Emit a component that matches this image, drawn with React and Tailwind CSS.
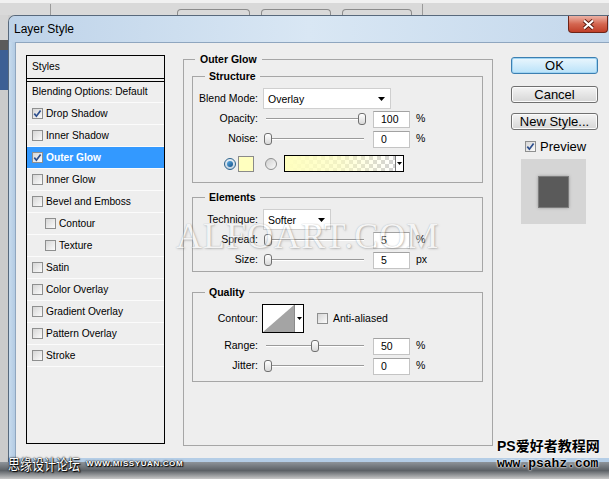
import React from "react"

const Arrow = () => (
  <svg width="7" height="4" viewBox="0 0 7 4">
    <path d="M0 0h7L3.5 4z" fill="#000" />
  </svg>
)

const Check = ({ checked, className = "" }) => (
  <span className={`flex items-center justify-center w-[11px] h-[11px] shrink-0 border border-[#8e8f8f] bg-linear-to-br from-[#d6d6d6] to-[#fbfbfb] ${className}`}>
    {checked && (
      <svg width="9" height="9" viewBox="0 0 9 9">
        <path d="M1.3 4.6l2.1 2.6 4.2-5.8" fill="none" stroke="#2d4f8e" strokeWidth="1.7" />
      </svg>
    )}
  </span>
)

const Slider = ({ thumb }) => (
  <div className="relative w-[102px] h-[14px] flex items-center">
    <div className="mx-[2px] flex-1 h-[2px] border-t border-[#9a9a9a] border-b border-b-white" />
    <span className={`absolute top-[1px] w-[8px] h-[12px] rounded-[3px] border border-[#707070] bg-linear-to-b from-white to-[#d8d8d8] ${thumb}`} />
  </div>
)

const NumBox = ({ v }) => (
  <div className="w-[37px] h-[17px] bg-white border border-[#c4c4c4] border-t-[#a2a2a2] pl-[7px] leading-[15px]">{v}</div>
)

const SliderRow = ({ label, thumb, value, unit = "%" }) => (
  <div className="flex items-center h-[20px]">
    <span className="w-[65px] text-right">{label}</span>
    <div className="ml-[6px]"><Slider thumb={thumb} /></div>
    <div className="ml-[7px]"><NumBox v={value} /></div>
    <span className="ml-[6px]">{unit}</span>
  </div>
)

const Select = ({ value, w }) => (
  <div className={`flex items-center justify-between h-[21px] ml-[5px] bg-white border border-[#cfcfcf] pl-[4px] pr-[5px] ${w}`}>
    <span className="pt-[2px]">{value}</span>
    <Arrow />
  </div>
)

const rows = [
  { name: "Drop Shadow", checked: true },
  { name: "Inner Shadow" },
  { name: "Outer Glow", checked: true, active: true },
  { name: "Inner Glow" },
  { name: "Bevel and Emboss" },
  { name: "Contour", indent: true },
  { name: "Texture", indent: true },
  { name: "Satin" },
  { name: "Color Overlay" },
  { name: "Gradient Overlay" },
  { name: "Pattern Overlay" },
  { name: "Stroke" },
]

const Button = ({ children, primary, className = "" }) => (
  <div
    className={`h-[17px] w-[87px] rounded-[3px] border text-center text-[13px] leading-[15px] ${
      primary
        ? "border-[#3c7fb1] bg-linear-to-b from-[#eaf6fd] to-[#b9e2f9] shadow-[inset_0_0_0_1px_#9fd4f3]"
        : "border-[#707070] bg-linear-to-b from-[#f4f4f4] to-[#d6d6d6] shadow-[inset_0_0_0_1px_#fbfbfb]"
    } ${className}`}
  >
    {children}
  </div>
)

export default function App() {
  return (
    <div className="relative w-[609px] h-[479px] overflow-hidden bg-[#cdcdcd] font-['Liberation_Sans',Arial,sans-serif] text-black">
      {/* photoshop toolbar behind the dialog */}
      <div className="h-[15px] bg-[#d9d9d9] border-t-[3px] border-[#f1f1f1] flex items-end">
        <div className="ml-[50px] w-px h-[11px] bg-[#9a9a9a]" />
        <div className="ml-[126px] w-[73px] h-[6px] border border-b-0 border-[#8c8c8c] rounded-t-[4px]" />
        <div className="ml-[11px] w-[70px] h-[6px] border border-b-0 border-[#8c8c8c] rounded-t-[4px]" />
        <div className="ml-[11px] w-[70px] h-[6px] border border-b-0 border-[#8c8c8c] rounded-t-[4px]" />
        <div className="ml-[10px] w-px h-[11px] bg-[#9a9a9a]" />
      </div>

      <div className="flex">
        <div className="w-[8px] flex flex-col">
          <div className="h-[25px] bg-[#d4d4d4]" />
          <div className="h-[10px] bg-[#5b5b5b]" />
          <div className="h-[40px] bg-[#3c5f94]" />
          <div className="flex-1 bg-[#cbcbcb]" />
        </div>

        {/* dialog window */}
        <div className="flex-1 flex flex-col rounded-tl-[7px] overflow-hidden border-l border-t border-[#58697c]">
          <div className="h-[26px] flex items-start justify-between bg-linear-to-r from-[#bed3e9] via-[#d9e7f4] to-[#c4d8ec]">
            <span className="ml-[5px] mt-[6px] text-[12px] leading-[14px]">Layer Style</span>
            <div className="w-[40px] h-[17px] mr-[1px] rounded-b-[4px] border border-t-0 border-[#6d2418] bg-linear-to-b from-[#ebb2a6] via-[#d46650] to-[#c03e28] flex items-center justify-center">
              <svg width="13" height="11" viewBox="0 0 13 11">
                <path d="M2 1.5l9 8M11 1.5l-9 8" stroke="#5a1a10" strokeWidth="4" />
                <path d="M2 1.5l9 8M11 1.5l-9 8" stroke="#fff" strokeWidth="2.2" />
              </svg>
            </div>
          </div>

          <div className="flex">
            <div className="w-[6px] bg-linear-to-r from-[#c7dbee] to-[#b3cbe3]" />
            <div className="flex-1 h-[416px] bg-[#eeeeee] border-t border-l border-[#8fa6bf] pt-[10px] pl-[10px] flex items-start text-[10.5px]">
              {/* styles list */}
              <div className="w-[139px] h-[389px] mt-[2px] border border-black text-[10.2px]">
                <div className="h-[22px] pl-[5px] flex items-center">Styles</div>
                <div className="h-[4px] border-y border-black" />
                <div className="h-[21px] pl-[5px] flex items-center border-b border-[#fbfbfb]">Blending Options: Default</div>
                {rows.map((r) => (
                  <div
                    key={r.name}
                    className={`h-[22px] flex items-center border-b border-[#fbfbfb] ${r.indent ? "pl-[18px]" : "pl-[5px]"} ${
                      r.active ? "bg-[#3399ff] text-white font-bold" : ""
                    }`}
                  >
                    <Check checked={r.checked} />
                    <span className="ml-[3px]">{r.name}</span>
                  </div>
                ))}
              </div>

              {/* outer glow settings */}
              <fieldset className="w-[310px] h-[393px] ml-[18px] border border-[#a6a6a6] pl-[8px] pr-[9px]">
                <legend className="ml-[3px] px-[5px] font-bold leading-[13px]">Outer Glow</legend>

                <fieldset className="mt-[4px] border border-[#a6a6a6] pt-[5px] pb-[10px]">
                  <legend className="ml-[12px] px-[4px] font-bold leading-[13px]">Structure</legend>
                  <div className="flex items-center h-[21px]">
                    <span className="w-[65px] text-right">Blend Mode:</span>
                    <Select value="Overlay" w="w-[128px]" />
                  </div>
                  <SliderRow label="Opacity:" thumb="left-[94px]" value="100" />
                  <SliderRow label="Noise:" thumb="left-0" value="0" />
                  <div className="flex items-center h-[17px] mt-[6px]">
                    <span className="ml-[31px] w-[12px] h-[12px] rounded-full border border-[#2c628b] bg-linear-to-b from-[#e6eef5] to-[#c3d3e2] flex items-center justify-center">
                      <span className="w-[6px] h-[6px] rounded-full bg-linear-to-br from-[#5fb0e8] to-[#0d4f86]" />
                    </span>
                    <span className="ml-[2px] w-[16px] h-[16px] bg-[#ffffbf] border border-[#8a8a8a]" />
                    <span className="ml-[11px] w-[12px] h-[12px] rounded-full border border-[#8e8f8f] bg-linear-to-br from-[#d0d0d0] to-[#fafafa]" />
                    <div className="ml-[7px] w-[120px] h-[17px] border border-black flex">
                      <div className="flex-1 bg-[conic-gradient(#d2d2d2_25%,#ffffff_0_50%,#d2d2d2_0_75%,#ffffff_0)] bg-[length:8px_8px]">
                        <div className="h-full bg-linear-to-r from-[#ffffbf] via-[#ffffbf]/70 to-transparent" />
                      </div>
                      <div className="w-[8px] border-l border-[#7a7a7a] bg-white flex items-center justify-center">
                        <svg width="5" height="3" viewBox="0 0 5 3"><path d="M0 0h5L2.5 3z" fill="#000" /></svg>
                      </div>
                    </div>
                  </div>
                </fieldset>

                <fieldset className="mt-[8px] border border-[#a6a6a6] pt-[5px] pb-[1px]">
                  <legend className="ml-[12px] px-[4px] font-bold leading-[13px]">Elements</legend>
                  <div className="flex items-center h-[21px]">
                    <span className="w-[65px] text-right">Technique:</span>
                    <Select value="Softer" w="w-[68px]" />
                  </div>
                  <SliderRow label="Spread:" thumb="left-0" value="5" />
                  <SliderRow label="Size:" thumb="left-0" value="5" unit="px" />
                </fieldset>

                <fieldset className="mt-[14px] border border-[#a6a6a6] pt-[5px] pb-[5px]">
                  <legend className="ml-[12px] px-[4px] font-bold leading-[13px]">Quality</legend>
                  <div className="flex items-center h-[29px]">
                    <span className="w-[65px] text-right">Contour:</span>
                    <div className="ml-[4px] w-[42px] h-[29px] border border-black flex bg-white">
                      <svg width="31" height="27" viewBox="0 0 31 27" className="shrink-0">
                        <path d="M0 27L31 0V27z" fill="#a4a4a4" />
                      </svg>
                      <div className="flex-1 border-l border-[#8a8a8a] flex items-center justify-center">
                        <svg width="5" height="3" viewBox="0 0 5 3"><path d="M0 0h5L2.5 3z" fill="#000" /></svg>
                      </div>
                    </div>
                    <Check className="ml-[13px]" />
                    <span className="ml-[5px]">Anti-aliased</span>
                  </div>
                  <div className="mt-[3px]">
                    <SliderRow label="Range:" thumb="left-[47px]" value="50" />
                  </div>
                  <SliderRow label="Jitter:" thumb="left-0" value="0" />
                </fieldset>
              </fieldset>

              {/* buttons + preview */}
              <div className="ml-[18px] mt-[4px] w-[87px] flex flex-col">
                <Button primary>OK</Button>
                <Button className="mt-[12px]">Cancel</Button>
                <Button className="mt-[10px]">New Style...</Button>
                <div className="mt-[10px] h-[13px] pl-[14px] flex items-center text-[13px]">
                  <Check checked />
                  <span className="ml-[4px]">Preview</span>
                </div>
                <div className="mt-[6px] ml-[10px] w-[65px] h-[65px] bg-[#d5d5d5] flex items-center justify-center">
                  <div className="w-[31px] h-[32px] bg-[#5a5a5a] border border-[#7c7c7c] shadow-[0_0_3px_#9a9a9a]" />
                </div>
              </div>
            </div>
          </div>
          <div className="h-[4px] bg-[#b4cde6]" />
        </div>
      </div>

      <div className="h-[17px] bg-linear-to-b from-[#8e949a] via-[#5c6166] to-[#c9c9c9]" />

      {/* watermarks */}
      <div className="absolute left-[176px] top-[218px] opacity-40 font-['Liberation_Serif',serif] text-[36px] leading-none tracking-[1px] text-white [text-shadow:0_0_1px_#4a4a4a,1px_1px_2px_#6a6a6a]">
        ALFOART.COM
      </div>
      <div className="absolute left-[8px] top-[455px] flex items-center text-white [text-shadow:0_0_1px_#000,0_0_2px_#000,1px_1px_1px_#000]">
        <span className="font-['Noto_Sans_CJK_SC',sans-serif] text-[12px] leading-[17px] scale-y-[1.2]">思缘设计论坛</span>
        <span className="ml-[6px] text-[8px] font-bold tracking-[0.6px]">WWW.MISSYUAN.COM</span>
      </div>
      <div className="absolute left-[497px] top-[437px] font-bold text-black [text-shadow:0_0_2px_#fff,0_0_2px_#fff]">
        <div className="text-[14px] leading-[18px] font-['Liberation_Sans','Noto_Sans_CJK_SC',sans-serif]">PS爱好者教程网</div>
        <div className="font-['Liberation_Mono',monospace] text-[13px] leading-[17px]">www.psahz.com</div>
      </div>
    </div>
  )
}
